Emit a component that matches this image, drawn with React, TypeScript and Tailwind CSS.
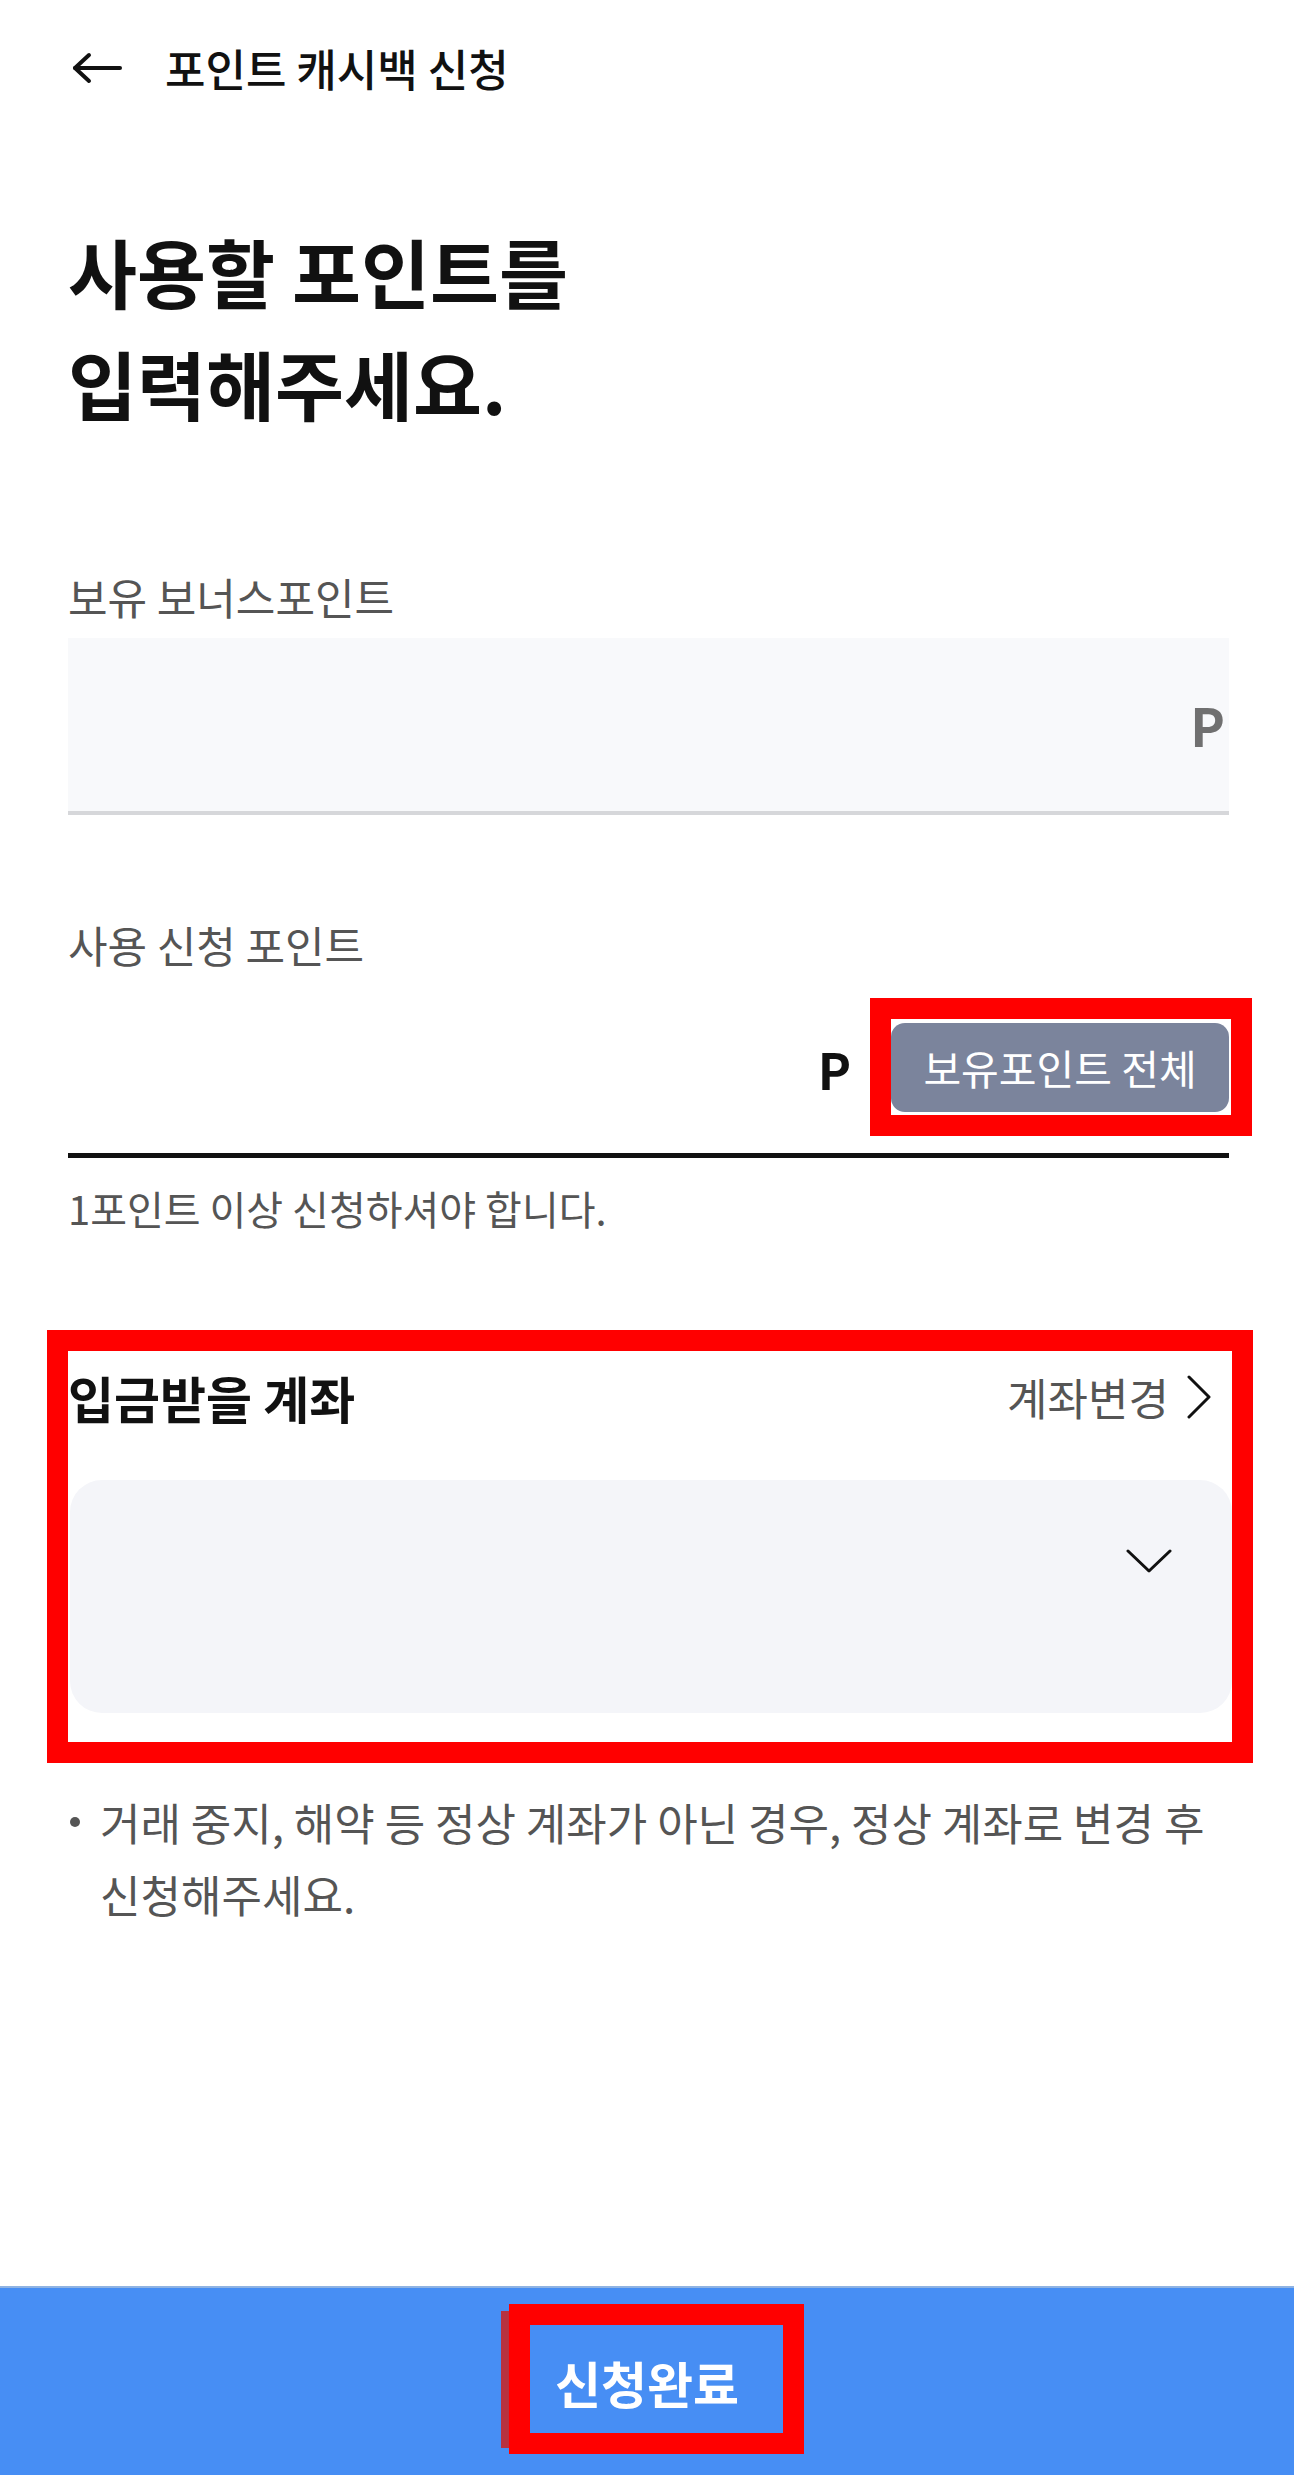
export default function App() {
  return (
    <div className="min-h-[2475px] flex flex-col bg-white font-['Noto_Sans_CJK_KR',sans-serif] text-[#111]">
      {/* header */}
      <header className="h-[136px] flex items-center pl-[72px]">
        <svg width="50" height="32" viewBox="0 0 50 32" fill="none" stroke="#111" strokeWidth={4} strokeLinecap="round" strokeLinejoin="round">
          <path d="M3 16H48" />
          <path d="M17 3L3 16L17 29" />
        </svg>
        <h1 className="ml-[43px] text-[44px] leading-[52px] font-medium">포인트 캐시백 신청</h1>
      </header>

      <main className="pl-[68px] pr-[65px]">
        <h2 className="mt-[79px] text-[75px] leading-[112px] font-bold">
          사용할 포인트를
          <br />
          입력해주세요.
        </h2>

        <p className="mt-[133px] text-[43px] leading-[48px] text-[#555]">보유 보너스포인트</p>
        <div className="mt-[18px] h-[177px] bg-[#f8f9fb] border-b-4 border-[#d6d7da] flex items-center justify-end pr-[4px]">
          <span className="text-[52px] leading-none font-bold text-[#707070]">P</span>
        </div>

        <p className="mt-[105px] text-[43px] leading-[48px] text-[#555]">사용 신청 포인트</p>
        <div className="flex items-center justify-end gap-[40px] pt-[55px] pb-[41px] border-b-[5px] border-[#111]">
          <span className="text-[50px] leading-none font-bold">P</span>
          <div className="relative">
            <button className="w-[338px] h-[89px] rounded-[14px] bg-[#7b849c] text-white text-[41px] leading-none">
              보유포인트 전체
            </button>
            <span className="absolute -left-[21px] -top-[25px] -right-[23px] -bottom-[24px] border-[21px] border-[#ff0000]" />
          </div>
        </div>
        <p className="mt-[27px] text-[40px] leading-[46px] text-[#555]">1포인트 이상 신청하셔야 합니다.</p>

        {/* account section */}
        <section className="relative mt-[120px] -mr-[3px] pb-[29px]">
          <div className="h-[92px] flex items-center justify-between pr-[20px]">
            <h3 className="text-[50px] leading-[56px] font-bold">입금받을 계좌</h3>
            <button className="flex items-center gap-[17px] text-[44px] leading-[48px] text-[#555]">
              계좌변경
              <svg width="26" height="44" viewBox="0 0 26 44" fill="none" stroke="#111" strokeWidth={3} strokeLinecap="round" strokeLinejoin="round">
                <path d="M3 2L23 22L3 42" />
              </svg>
            </button>
          </div>
          <div className="mt-[37px] ml-[2px] h-[233px] rounded-[32px] bg-[#f4f5f9] flex justify-end items-start pt-[69px] pr-[60px]">
            <svg width="46" height="24" viewBox="0 0 46 24" fill="none" stroke="#111" strokeWidth={3} strokeLinecap="round" strokeLinejoin="round">
              <path d="M2 2L23 22L44 2" />
            </svg>
          </div>
          <span className="absolute -left-[21px] -top-[21px] -right-[21px] -bottom-[21px] border-[21px] border-[#ff0000]" />
        </section>

        <div className="mt-[44px] flex items-start">
          <div className="w-[32px] h-[72px] flex items-center pl-[2px] shrink-0">
            <span className="w-[10px] h-[10px] rounded-full bg-[#555]" />
          </div>
          <p className="text-[44px] leading-[72px] text-[#555]">
            거래 중지, 해약 등 정상 계좌가 아닌 경우, 정상 계좌로 변경 후 신청해주세요.
          </p>
        </div>
      </main>

      {/* bottom bar */}
      <footer className="mt-auto h-[189px] bg-[#478ef4] border-t-2 border-[#8fb3e3] flex items-center justify-center">
        <div className="relative">
          <span className="block text-[50px] leading-[50px] font-bold text-white">신청완료</span>
          <span className="absolute -left-[54px] -top-[46px] -bottom-[41px] w-[8px] bg-[#b8323f]" />
          <span className="absolute -left-[46px] -top-[53px] -right-[65px] -bottom-[47px] border-[21px] border-[#ff0000]" />
        </div>
      </footer>
    </div>
  )
}
